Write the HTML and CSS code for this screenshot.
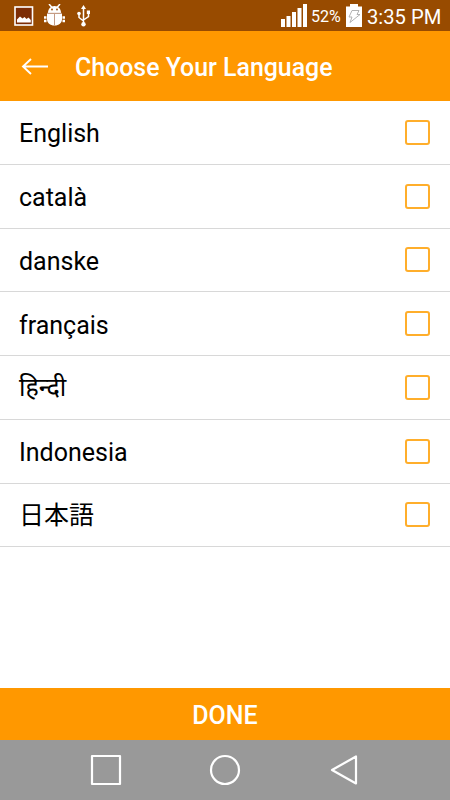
FILE: index.html
```html
<!DOCTYPE html>
<html lang="en">
  <head>
    <meta charset="UTF-8" />
    <meta name="viewport" content="width=device-width, initial-scale=1.0" />
    <title>Choose Your Language</title>
    <link rel="stylesheet" href="styles.css" />
  </head>
  <body>
    <div class="status-bar">
      <div class="status-left">
        <svg width="20" height="20" viewBox="0 0 20 20">
          <rect x="1" y="1" width="17.5" height="18" fill="#7d2d05" stroke="#fff" stroke-width="1.6" />
          <path d="M3 16.5v-3l3-3 2.5 2 2-1.5 2 2 2-1.5 2.3 2.5v2.5z" fill="#fff" />
        </svg>
        <svg class="icon-android" width="22" height="23" viewBox="0 0 22 23" fill="#fff">
          <path d="M5 0l3 3.5M16 0l-3 3.5" stroke="#fff" stroke-width="1.5" />
          <path d="M4 9C4 5 6.500 2 10.500 2S17 5 17 9z" />
          <path d="M3 9.500h15V15c0 4-3 6.500-7.500 6.500S3 19 3 15z" />
          <path d="M0 13.500h2.500M0 17h2.500M18.500 13.500H21M18.500 17H21" stroke="#fff" stroke-width="2.500" />
          <path d="M3 9.300h15M10.500 10v11" stroke="#c49a85" stroke-width="1" />
          <circle cx="8" cy="5.500" r=".9" fill="#984b00" />
          <circle cx="13" cy="5.500" r=".9" fill="#984b00" />
        </svg>
        <svg class="icon-usb" width="14" height="22" viewBox="0 0 14 22" fill="none" stroke="#fff" stroke-width="1.5">
          <path d="M6.500 3v16M2 9v3.500l4.500 3.500M11.500 8v3.500L6.500 15" />
          <path d="M6.500 0l2.500 4H4z" fill="#fff" stroke="none" />
          <circle cx="2" cy="8.500" r="1.800" fill="#fff" stroke="none" />
          <path d="M9.800 5.500H13V9H9.800z" fill="#fff" stroke="none" />
          <circle cx="6.500" cy="19.200" r="2.200" fill="#fff" stroke="none" />
        </svg>
      </div>
      <div class="status-right">
        <svg width="27" height="24" viewBox="0 0 27 24" fill="#fff">
          <path d="M0 15h4v8H0zM5.500 12h4v11h-4zM11 8h4v15h-4zM16.500 4h4v19h-4zM22 0h4v23h-4z" />
        </svg>
        <span class="percent">52%</span>
        <svg width="16" height="23" viewBox="0 0 16 23">
          <path d="M4 0h8v2.500h4V23H0V2.500h4z" fill="#fff" />
          <path d="M6 6.500h7l-2 4h3L4 18.500l2-5.500H3z" fill="none" stroke="#aaa" stroke-width=".9" />
        </svg>
        <span class="time">3:35 PM</span>
      </div>
    </div>

    <header class="header">
      <svg class="back" width="27" height="18" viewBox="0 0 27 18" fill="none" stroke="#fff" stroke-width="1.9">
        <path d="M27 9.500H2M10 2L2 9.500 10 17" />
      </svg>
      <h1>Choose Your Language</h1>
    </header>

    <main class="languages">
      <label class="language"><span>English</span><input type="checkbox" /></label>
      <label class="language"><span>català</span><input type="checkbox" /></label>
      <label class="language"><span>danske</span><input type="checkbox" /></label>
      <label class="language"><span>français</span><input type="checkbox" /></label>
      <label class="language"><span class="hindi" lang="hi">हिन्दी</span><input type="checkbox" /></label>
      <label class="language"><span>Indonesia</span><input type="checkbox" /></label>
      <label class="language"><span class="japanese" lang="ja">日本語</span><input type="checkbox" /></label>
    </main>

    <button class="done">DONE</button>

    <nav class="nav-bar">
      <svg width="32" height="32" viewBox="0 0 32 32">
        <rect x="2" y="2" width="28" height="28" />
      </svg>
      <svg width="32" height="32" viewBox="0 0 32 32">
        <circle cx="16" cy="16" r="14" />
      </svg>
      <svg width="32" height="32" viewBox="0 0 32 32">
        <path d="M29 2.500v27L5 16z" />
      </svg>
    </nav>
  </body>
</html>
```
FILE: styles.css
```css
* {
  box-sizing: border-box;
}

body {
  display: flex;
  flex-direction: column;
  height: 100vh;
  margin: 0;
  overflow: hidden;
  background-color: #fff;
  font-family: Roboto, "Noto Sans", "Noto Sans CJK JP", sans-serif;
}

svg {
  display: block;
  flex: none;
}

.status-bar {
  display: flex;
  justify-content: space-between;
  height: 31px;
  background-color: #984b00;
  color: #fff;
}

.status-left {
  display: flex;
  align-items: center;
  padding-left: 14px;
}

.icon-android {
  margin-left: 10px;
}

.icon-usb {
  margin-left: 11px;
}

.status-right {
  display: flex;
  align-items: center;
  padding-right: 9px;
}

.percent {
  width: 35px;
  margin-left: 3px;
  padding-top: 2px;
  font-size: 16px;
}

.time {
  width: 74px;
  margin-left: 5px;
  padding-top: 2px;
  font-size: 20.2px;
  white-space: nowrap;
}

.header {
  display: flex;
  align-items: center;
  height: 70px;
  padding-left: 21px;
  background-color: #ff9800;
  color: #fff;
}

.header h1 {
  margin: 2px 0 0 27px;
  font-size: 24.9px;
  font-weight: 500;
  white-space: nowrap;
}

.languages {
  flex: 1;
}

.language {
  display: flex;
  align-items: center;
  justify-content: space-between;
  height: 63.75px;
  padding: 0 20px 0 19px;
  border-bottom: 1px solid #d8d8d8;
  color: #000;
  font-size: 25px;
}

.language span {
  padding-top: 4px;
  line-height: 30px;
}

.language .hindi,
.language .japanese {
  padding-top: 2px;
}

.language input {
  width: 25px;
  height: 25px;
  margin: 0;
  border: 2px solid #ffae2b;
  border-radius: 3px;
  appearance: none;
}

.done {
  height: 52px;
  padding: 2px 0 0;
  border: 0;
  background-color: #ff9800;
  color: #fff;
  font-family: inherit;
  font-size: 25px;
  font-weight: 500;
}

.nav-bar {
  display: flex;
  align-items: center;
  justify-content: space-between;
  height: 60px;
  padding: 0 91px 0 90px;
  background-color: #999;
}

.nav-bar svg {
  fill: none;
  stroke: #fff;
  stroke-width: 2.2;
  stroke-linejoin: round;
}
```
